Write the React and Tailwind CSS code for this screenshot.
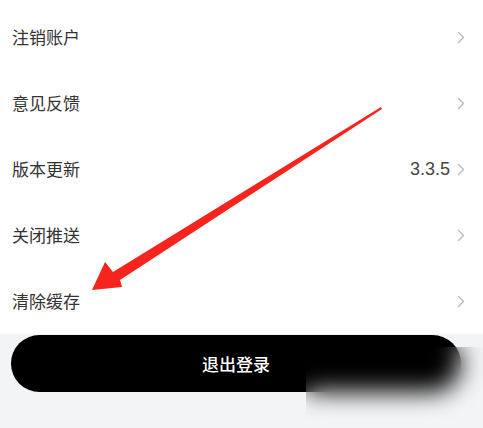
import React from "react";

const rows = [
  { label: "注销账户" },
  { label: "意见反馈" },
  { label: "版本更新", value: "3.3.5" },
  { label: "关闭推送" },
  { label: "清除缓存" },
];

const Chevron = () => (
  <svg width="8" height="13" viewBox="0 0 8 13" fill="none" className="shrink-0">
    <path d="M1.5 1.5 L6.5 6.5 L1.5 11.5" stroke="#b9b9b9" strokeWidth="1.4" strokeLinecap="round" strokeLinejoin="round" />
  </svg>
);

export default function App() {
  return (
    <div
      className="relative w-[483px] h-[428px] overflow-hidden bg-[#f3f4f6]"
      style={{ fontFamily: '"Noto Sans CJK SC", "Liberation Sans", sans-serif' }}
    >
      {/* settings list */}
      <div className="bg-white pt-1">
        {rows.map((row) => (
          <div key={row.label} className="flex h-[66px] items-center justify-between pl-3 pr-[18px]">
            <span className="text-[17px] text-[#333333]">{row.label}</span>
            <div className="flex items-center gap-[7px]">
              {row.value && (
                <span className="text-[18px] text-[#444444]" style={{ fontFamily: '"Liberation Sans", sans-serif' }}>
                  {row.value}
                </span>
              )}
              <Chevron />
            </div>
          </div>
        ))}
      </div>

      {/* logout */}
      <div className="pt-px">
        <button className="ml-[11px] flex h-[57px] w-[450px] items-center justify-center rounded-full bg-black text-[17px] font-medium text-white">
          退出登录
        </button>
      </div>

      {/* blurred patch over the bottom right */}
      <div className="absolute left-[306px] top-[347px] h-[81px] w-[177px] backdrop-blur-md" />

      {/* red annotation arrow */}
      <svg className="pointer-events-none absolute left-0 top-0" width="483" height="428" viewBox="0 0 483 428">
        <path
          d="M381 107 L382 109 L120 280 L122 287 L92 290 L105 262 L113 272 Z"
          fill="#f5241c"
        />
      </svg>
    </div>
  );
}
